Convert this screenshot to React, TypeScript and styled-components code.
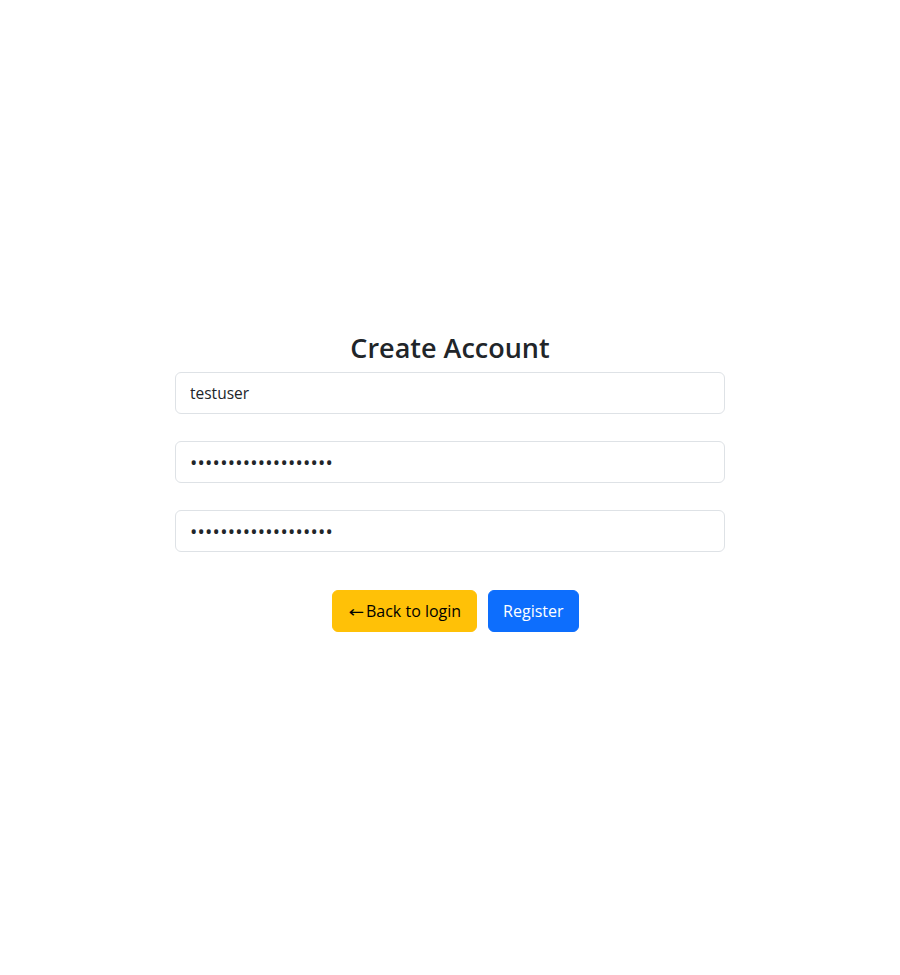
import React from "react";
import styled, { createGlobalStyle } from "styled-components";

const GlobalStyle = createGlobalStyle`
  html, body { margin: 0; padding: 0; background: #fff; }
  body {
    font-family: "Open Sans", "Noto Sans", Arial, sans-serif;
    color: #212529;
  }
  * { box-sizing: border-box; }
`;

const Page = styled.div`
  min-height: 975px;
  display: flex;
  flex-direction: column;
  align-items: center;
  padding-top: 331px;
`;

const Form = styled.form`
  width: 550px;
  display: flex;
  flex-direction: column;
`;

const Title = styled.h3`
  margin: 0 0 7px;
  text-align: center;
  font-size: 27px;
  font-weight: 600;
  line-height: 34px;
  color: #212529;
`;

const Input = styled.input<{ $secret?: boolean }>`
  display: block;
  width: 100%;
  height: 42px;
  margin-bottom: 27px;
  padding: 8px 14px;
  font-family: "Open Sans", "Noto Sans", Arial, sans-serif;
  font-size: ${(p) => (p.$secret ? "19.5px" : "15.5px")};
  letter-spacing: ${(p) => (p.$secret ? "0.2px" : "normal")};
  color: #212529;
  background: #fff;
  border: 1px solid #dee2e6;
  border-radius: 6px;
  outline: none;
`;

const Actions = styled.div`
  display: flex;
  justify-content: center;
  gap: 11px;
  margin-top: 11px;
  padding-left: 11px;
`;

const Button = styled.button<{ $variant: "warning" | "primary" }>`
  height: 42px;
  padding: 0 ${(p) => (p.$variant === "warning" ? "15px" : "14px")};
  display: inline-flex;
  align-items: center;
  font-family: "Open Sans", "Noto Sans", Arial, sans-serif;
  font-size: 16px;
  line-height: 24px;
  border: 1px solid ${(p) => (p.$variant === "warning" ? "#ffc107" : "#0d6efd")};
  background: ${(p) => (p.$variant === "warning" ? "#ffc107" : "#0d6efd")};
  color: ${(p) => (p.$variant === "warning" ? "#000" : "#fff")};
  border-radius: 6px;
  cursor: pointer;
`;

const Arrow = styled.span`
  font-family: "DejaVu Sans", sans-serif;
  font-size: 18.5px;
  line-height: 24px;
  margin-right: 2px;
  transform: translateY(1px) scaleY(0.85);
`;

export default function App() {
  return (
    <>
      <GlobalStyle />
      <Page>
        <Form onSubmit={(e) => e.preventDefault()}>
          <Title>Create Account</Title>
          <Input type="text" defaultValue="testuser" />
          <Input $secret type="password" defaultValue="testpassword1234567" />
          <Input $secret type="password" defaultValue="testpassword1234567" />
          <Actions>
            <Button type="button" $variant="warning">
              <Arrow>←</Arrow>Back to login
            </Button>
            <Button type="submit" $variant="primary">Register</Button>
          </Actions>
        </Form>
      </Page>
    </>
  );
}
